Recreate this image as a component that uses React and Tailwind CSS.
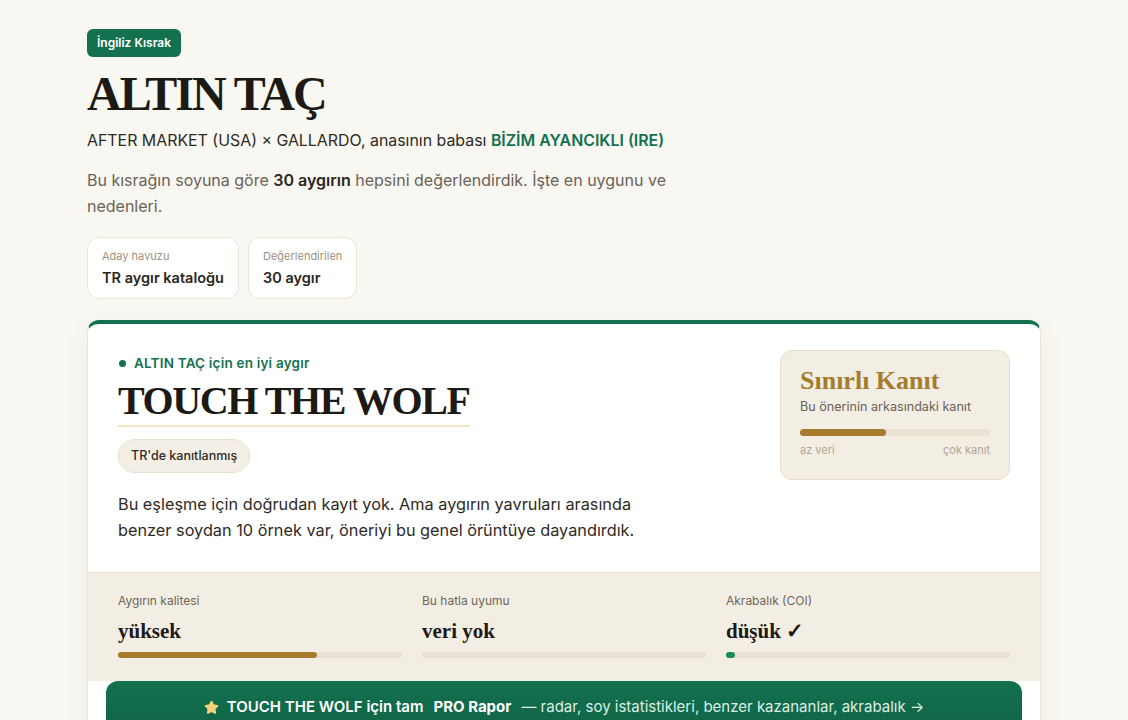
import { Star } from "lucide-react";

const serif = "font-['Liberation_Serif','DejaVu_Serif',serif]";

function StatBox({ label, value }) {
  return (
    <div className="rounded-xl border border-[#ece4d2] bg-white px-[14px] pt-[10px] pb-[10px]">
      <div className="text-[11px] leading-4 text-[#9c9282]">{label}</div>
      <div className="mt-[4px] text-[14.5px] font-semibold leading-5 text-[#2b2620]">{value}</div>
    </div>
  );
}

function Metric({ label, value, fill, color }) {
  return (
    <div>
      <div className="text-[12px] leading-4 text-[#6f665a]">{label}</div>
      <div className={`${serif} mt-[10px] text-[21px] font-bold leading-6 text-[#1d1a16]`}>{value}</div>
      <div className="mt-[9px] h-[6px] rounded-full bg-[#e8e1d3]">
        <div className="h-full rounded-full" style={{ width: fill, background: color }} />
      </div>
    </div>
  );
}

export default function App() {
  return (
    <div className="min-h-screen bg-[#f9f7f2] font-['Inter','Noto_Sans',sans-serif] text-[#2b2620]">
      <div className="mx-auto w-[954px] pt-[29px]">
        <span className="inline-block rounded-md bg-[#13714f] px-[10px] py-[6px] text-[12px] font-semibold leading-4 text-white">
          İngiliz Kısrak
        </span>
        <h1 className={`${serif} mt-[9px] text-[48px] font-bold leading-[56px] tracking-[-2px] text-[#1d1a16]`}>
          ALTIN TAÇ
        </h1>
        <p className="mt-[7px] text-[15.9px] leading-6 text-[#2f2a25]">
          AFTER MARKET (USA) × GALLARDO, anasının babası{" "}
          <span className="font-semibold text-[#13714f]">BİZİM AYANCIKLI (IRE)</span>
        </p>
        <p className="mt-[14px] w-[600px] text-[16px] leading-[26px] text-[#6b6258]">
          Bu kısrağın soyuna göre <b className="font-semibold text-[#2b2620]">30 aygırın</b> hepsini değerlendirdik. İşte en uygunu ve nedenleri.
        </p>
        <div className="mt-[18px] flex gap-[9px]">
          <StatBox label="Aday havuzu" value="TR aygır kataloğu" />
          <StatBox label="Değerlendirilen" value="30 aygır" />
        </div>

        <div className="mt-[21px] overflow-hidden rounded-xl border border-[#ebe4d6] border-t-4 border-t-[#13714f] bg-white shadow-[0_10px_30px_rgba(60,45,20,0.06)]">
          <div className="flex justify-between px-[30px] pt-[29px] pb-[29px]">
            <div>
              <div className="flex items-center gap-[8px] text-[13.5px] font-semibold leading-5 tracking-[0.2px] text-[#13714f]">
                <span className="ml-[1px] h-[7px] w-[7px] rounded-full bg-[#13714f]" />
                ALTIN TAÇ için en iyi aygır
              </div>
              <h2 className={`${serif} mt-[6px] inline-block border-b-2 border-[#f3e6c6] pb-[2px] text-[40px] font-bold leading-[44px] tracking-[-1.4px] text-[#1d1a16]`}>
                TOUCH THE WOLF
              </h2>
              <div>
                <span className="mt-[12px] inline-block rounded-full border border-[#e8dfcc] bg-[#f3efe6] px-[12px] py-[7px] text-[12.5px] font-medium leading-[18px] text-[#2f2a25]">
                  TR'de kanıtlanmış
                </span>
              </div>
              <p className="mt-[18px] w-[540px] text-[16.3px] leading-[26px] text-[#2f2a25]">
                Bu eşleşme için doğrudan kayıt yok. Ama aygırın yavruları arasında benzer soydan 10 örnek var, öneriyi bu genel örüntüye dayandırdık.
              </p>
            </div>
            <div className="-mt-[3px] h-[130px] w-[230px] rounded-xl border border-[#e8dfc9] bg-[#f3eee3] px-[19px] pt-[16px]">
              <div className={`${serif} text-[26px] font-bold leading-7 text-[#a57c2e]`}>Sınırlı Kanıt</div>
              <div className="mt-[2px] text-[12.6px] leading-5 text-[#6b6258]">Bu önerinin arkasındaki kanıt</div>
              <div className="mt-[12px] h-[7px] rounded-full bg-[#e9e1d2]">
                <div className="h-full w-[45%] rounded-full bg-[#a87c2f]" />
              </div>
              <div className="mt-[6px] flex justify-between text-[11px] leading-4 text-[#b0a695]">
                <span>az veri</span>
                <span>çok kanıt</span>
              </div>
            </div>
          </div>

          <div className="grid grid-cols-3 gap-[20px] border-t border-[#ebe4d6] bg-[#f3eee3] px-[30px] pt-[20px] pb-[23px]">
            <Metric label="Aygırın kalitesi" value="yüksek" fill="70%" color="#a87c2f" />
            <Metric label="Bu hatla uyumu" value="veri yok" fill="0%" color="#a87c2f" />
            <Metric label="Akrabalık (COI)" value="düşük ✓" fill="3%" color="#1b8a5a" />
          </div>

          <div className="px-[18px] pb-[18px]">
            <div className="flex items-center justify-center gap-[8px] rounded-t-xl bg-gradient-to-b from-[#13714f] to-[#0f6446] py-[16px] text-[15px] font-semibold leading-5 text-white">
              <Star className="h-[15px] w-[15px] fill-[#f2d27a] text-[#f2d27a]" />
              <span>TOUCH THE WOLF için tam</span>
              <span className="ml-[2px] font-bold">PRO Rapor</span>
              <span className="ml-[2px] font-normal text-[#dcefe6]">— radar, soy istatistikleri, benzer kazananlar, akrabalık →</span>
            </div>
          </div>
        </div>
      </div>
    </div>
  );
}
